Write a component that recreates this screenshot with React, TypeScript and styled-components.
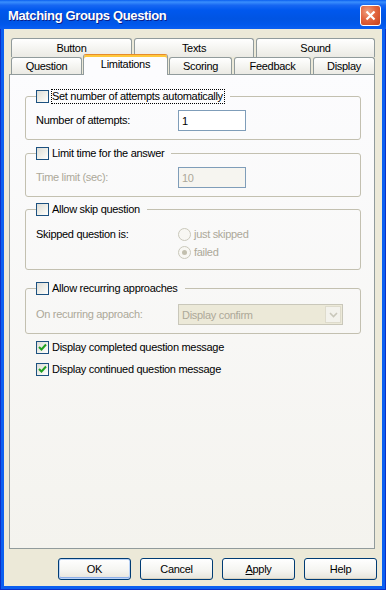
import React from "react";
import styled, { createGlobalStyle } from "styled-components";

// XP-style "Matching Groups Question" property dialog

const GlobalStyle = createGlobalStyle`
  html, body {
    margin: 0;
    padding: 0;
    background: #ffffff;
  }
  body {
    font-family: "Liberation Sans", Arial, sans-serif;
    font-size: 11px;
    letter-spacing: -0.3px;
    color: #000;
  }
`;

const Window = styled.div`
  width: 386px;
  height: 590px;
  display: flex;
  flex-direction: column;
  box-sizing: border-box;
  background: #0b55e6;
`;

const TitleBar = styled.div`
  height: 29px;
  flex: none;
  display: flex;
  align-items: center;
  padding: 1px 5px 0 8px;
  box-sizing: border-box;
  background: linear-gradient(
    to bottom,
    #0a5fef 0%,
    #3a8ffd 7%,
    #1767f2 18%,
    #0058ee 35%,
    #0054e3 65%,
    #0058ec 85%,
    #0b5ff2 100%
  );
`;

const Title = styled.span`
  font-family: "Liberation Sans", Arial, sans-serif;
  font-weight: bold;
  font-size: 13px;
  color: #ffffff;
  text-shadow: 1px 1px 0 #0a1e8a;
  letter-spacing: -0.35px;
`;

const CloseButton = styled.div`
  margin-left: auto;
  width: 21px;
  height: 21px;
  box-sizing: border-box;
  border: 1px solid #ffffff;
  border-radius: 3px;
  background: radial-gradient(circle at 35% 30%, #f0a080 0%, #e2653f 45%, #c6411b 100%);
  display: flex;
  align-items: center;
  justify-content: center;
`;

const Frame = styled.div`
  flex: 1;
  display: flex;
  padding: 0 4px 4px 4px;
  box-shadow: inset 1px 0 0 #0a2fc8, inset -1px 0 0 #0a2fc8, inset 0 -1px 0 #0a2fc8;
  background: #0b5ff0;
`;

const Client = styled.div`
  flex: 1;
  display: flex;
  flex-direction: column;
  background: #ece9d8;
  padding: 9px 7px 6px 5px;
`;

const TabRow = styled.div<{ $front?: boolean }>`
  display: flex;
  gap: 2px;
  padding-left: 2px;
  height: ${(p) => (p.$front ? 18 : 19)}px;
  margin-bottom: ${(p) => (p.$front ? -1 : 0)}px;
  align-items: flex-start;
`;

const Tab = styled.div<{ $w: number; $active?: boolean; $tall?: boolean }>`
  position: relative;
  width: ${(p) => p.$w}px;
  height: ${(p) => (p.$active ? 21 : p.$tall ? 19 : 17)}px;
  margin: ${(p) => (p.$active ? "-3px -1px 0 -1px" : "0")};
  z-index: ${(p) => (p.$active ? 2 : 0)};
  box-sizing: border-box;
  border: 1px solid #919b9c;
  border-bottom: none;
  border-radius: 3px 3px 0 0;
  display: flex;
  align-items: center;
  justify-content: center;
  padding-bottom: ${(p) => (p.$active ? 2 : 0)}px;
  background: ${(p) =>
    p.$active
      ? "#fcfcfe"
      : "linear-gradient(to bottom, #ffffff 0%, #f7f7f4 40%, #ebeae4 100%)"};
  ${(p) =>
    p.$active
      ? "border-top: 1px solid #e68b2c; box-shadow: inset 0 2px 0 #ffc83c;"
      : ""}
`;

const Panel = styled.div`
  flex: 1;
  display: flex;
  flex-direction: column;
  border: 1px solid #919b9c;
  background: linear-gradient(to bottom, #fcfcfe 0%, #f4f3ee 100%);
  padding: 14px 13px 0 15px;
`;

const GroupBox = styled.fieldset<{ $gap: number; $top?: number; $bottom?: number }>`
  margin: ${(p) => p.$gap}px 0 0 0;
  padding: ${(p) => p.$top ?? 7}px 10px ${(p) => p.$bottom ?? 8}px 10px;
  border: 1px solid #c3c0b0;
  border-radius: 3px;
  min-width: 0;
`;

const Legend = styled.legend`
  padding: 0 5px 0 0;
  margin: 0;
  height: 14px;
  display: flex;
  align-items: center;
  gap: 3px;
`;

const FormRow = styled.div<{ $h?: number }>`
  display: flex;
  align-items: center;
  height: ${(p) => p.$h ?? 21}px;
`;

const FieldLabel = styled.span<{ $disabled?: boolean }>`
  width: 142px;
  flex: none;
  color: ${(p) => (p.$disabled ? "#aca899" : "#000")};
  align-self: flex-start;
  line-height: 21px;
`;

const Label = styled.span<{ $disabled?: boolean; $focus?: boolean }>`
  color: ${(p) => (p.$disabled ? "#aca899" : "#000")};
  white-space: nowrap;
  line-height: 13px;
  border: 1px ${(p) => (p.$focus ? "dotted #000" : "solid transparent")};
  padding: 0 1px 0 0;
  margin-left: -1px;
`;

const TextBox = styled.div<{ $disabled?: boolean }>`
  width: 68px;
  height: 21px;
  box-sizing: border-box;
  border: 1px solid #7f9db9;
  background: ${(p) => (p.$disabled ? "#f6f5f0" : "#ffffff")};
  color: ${(p) => (p.$disabled ? "#aca899" : "#000")};
  display: flex;
  align-items: center;
  padding-left: 3px;
`;

const Box = styled.span`
  width: 13px;
  height: 13px;
  flex: none;
  box-sizing: border-box;
  border: 1px solid #1c5180;
  background: linear-gradient(135deg, #dcdcd7 0%, #f0f0ea 55%, #ffffff 100%);
  display: flex;
  align-items: center;
  justify-content: center;
`;

const RadioColumn = styled.div`
  display: flex;
  flex-direction: column;
  margin-top: 2px;
`;

const RadioRow = styled.div`
  display: flex;
  align-items: center;
  gap: 3px;
  height: 18px;
`;

const RadioDot = styled.span<{ $checked?: boolean }>`
  width: 13px;
  height: 13px;
  box-sizing: border-box;
  border: 1px solid #cac8bb;
  border-radius: 50%;
  background: #f8f7f3;
  display: flex;
  align-items: center;
  justify-content: center;
  &::after {
    content: "";
    width: 5px;
    height: 5px;
    border-radius: 50%;
    background: ${(p) => (p.$checked ? "#c2bfae" : "transparent")};
  }
`;

const Combo = styled.div`
  width: 165px;
  height: 21px;
  box-sizing: border-box;
  border: 1px solid #c9c7ba;
  background: #ece9d8;
  display: flex;
  align-items: center;
  padding: 1px;
  color: #aca899;
`;

const ComboText = styled.span`
  flex: 1;
  padding-left: 2px;
`;

const ComboButton = styled.span`
  width: 16px;
  height: 17px;
  box-sizing: border-box;
  border: 1px solid #dedbcc;
  background: #f3f2ec;
  display: flex;
  align-items: center;
  justify-content: center;
`;

const CheckRow = styled.div<{ $first?: boolean }>`
  display: flex;
  align-items: center;
  gap: 3px;
  height: 22px;
  margin-left: 11px;
  margin-top: ${(p) => (p.$first ? 2 : 0)}px;
`;

const ButtonBar = styled.div`
  display: flex;
  justify-content: flex-end;
  gap: 9px;
  margin: 9px -2px 0 0;
`;

const Button = styled.div<{ $default?: boolean }>`
  width: 73px;
  height: 22px;
  box-sizing: border-box;
  border: 1px solid #003c74;
  border-radius: 3px;
  display: flex;
  align-items: center;
  justify-content: center;
  background: linear-gradient(to bottom, #ffffff 0%, #f4f4f0 60%, #e6e4da 100%);
  box-shadow: ${(p) =>
    p.$default
      ? "inset 0 0 0 1px #bcd4f6, inset 0 -1px 0 1px #8fb0ea"
      : "inset 0 -1px 0 #d8d2c2"};
`;

const Check = () => (
  <svg width="9" height="9" viewBox="0 0 9 9">
    <path d="M1 4 L3.5 6.5 L8 1.5" fill="none" stroke="#21a121" strokeWidth="2" />
  </svg>
);

const CheckBox: React.FC<{ checked?: boolean }> = ({ checked }) => (
  <Box>{checked && <Check />}</Box>
);

const frontTabs = [
  { label: "Question", w: 71 },
  { label: "Limitations", w: 85, active: true },
  { label: "Scoring", w: 63 },
  { label: "Feedback", w: 77 },
  { label: "Display", w: 62 },
];

const backTabs = [
  { label: "Button", w: 121 },
  { label: "Texts", w: 120 },
  { label: "Sound", w: 119 },
];

export default function App() {
  return (
    <>
      <GlobalStyle />
      <Window>
        <TitleBar>
          <Title>Matching Groups Question</Title>
          <CloseButton>
            <svg width="11" height="11" viewBox="0 0 11 11">
              <path d="M1.5 1.5 L9.5 9.5 M9.5 1.5 L1.5 9.5" stroke="#fff" strokeWidth="2.2" />
            </svg>
          </CloseButton>
        </TitleBar>
        <Frame>
          <Client>
            <TabRow>
              {backTabs.map((t) => (
                <Tab key={t.label} $w={t.w} $tall>
                  {t.label}
                </Tab>
              ))}
            </TabRow>
            <TabRow $front>
              {frontTabs.map((t) => (
                <Tab key={t.label} $w={t.w} $active={t.active}>
                  {t.label}
                </Tab>
              ))}
            </TabRow>
            <Panel>
              <GroupBox $gap={0}>
                <Legend>
                  <CheckBox />
                  <Label $focus>Set number of attempts automatically</Label>
                </Legend>
                <FormRow>
                  <FieldLabel>Number of attempts:</FieldLabel>
                  <TextBox>1</TextBox>
                </FormRow>
              </GroupBox>

              <GroupBox $gap={6}>
                <Legend>
                  <CheckBox />
                  <Label>Limit time for the answer</Label>
                </Legend>
                <FormRow>
                  <FieldLabel $disabled>Time limit (sec):</FieldLabel>
                  <TextBox $disabled>10</TextBox>
                </FormRow>
              </GroupBox>

              <GroupBox $gap={5} $top={8} $bottom={8}>
                <Legend>
                  <CheckBox />
                  <Label>Allow skip question</Label>
                </Legend>
                <FormRow $h={37}>
                  <FieldLabel style={{ lineHeight: "20px" }}>Skipped question is:</FieldLabel>
                  <RadioColumn>
                    <RadioRow>
                      <RadioDot />
                      <Label $disabled>just skipped</Label>
                    </RadioRow>
                    <RadioRow>
                      <RadioDot $checked />
                      <Label $disabled>failed</Label>
                    </RadioRow>
                  </RadioColumn>
                </FormRow>
              </GroupBox>

              <GroupBox $gap={11} $top={9} $bottom={8}>
                <Legend>
                  <CheckBox />
                  <Label>Allow recurring approaches</Label>
                </Legend>
                <FormRow>
                  <FieldLabel $disabled>On recurring approach:</FieldLabel>
                  <Combo>
                    <ComboText>Display confirm</ComboText>
                    <ComboButton>
                      <svg width="9" height="6" viewBox="0 0 9 6">
                        <path d="M1 1 L4.5 4.5 L8 1" fill="none" stroke="#c9c7ba" strokeWidth="1.6" />
                      </svg>
                    </ComboButton>
                  </Combo>
                </FormRow>
              </GroupBox>

              <CheckRow $first>
                <CheckBox checked />
                <Label>Display completed question message</Label>
              </CheckRow>
              <CheckRow>
                <CheckBox checked />
                <Label>Display continued question message</Label>
              </CheckRow>
            </Panel>
            <ButtonBar>
              <Button $default>OK</Button>
              <Button>Cancel</Button>
              <Button>
                <span>
                  <u>A</u>pply
                </span>
              </Button>
              <Button>Help</Button>
            </ButtonBar>
          </Client>
        </Frame>
      </Window>
    </>
  );
}
